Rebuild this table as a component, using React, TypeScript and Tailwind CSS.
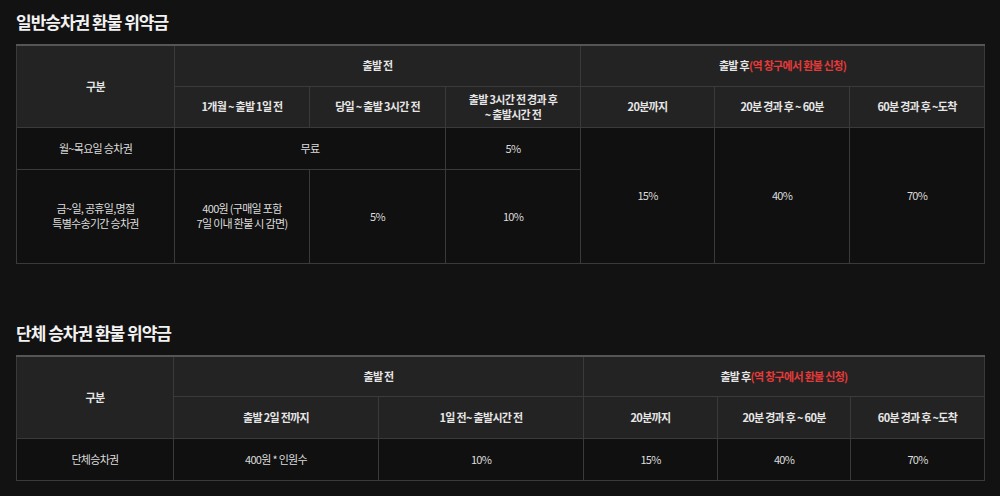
const font = {
  fontFamily: '"Noto Sans CJK KR", "Noto Sans", sans-serif',
};

const th =
  "border border-[#3a3a3a] bg-[#232323] text-center align-middle text-[11px] font-bold tracking-[-0.7px] text-[#e6e6e6] leading-[15px]";
const td =
  "border border-[#3a3a3a] bg-[#101010] text-center align-middle text-[11px] tracking-[-0.7px] text-[#dcdcdc] leading-[15px]";

function Title({ children }: { children: React.ReactNode }) {
  return (
    <h2 className="h-[24px] text-[17px] font-bold leading-[24px] tracking-[-1px] text-[#f2f2f2]">
      {children}
    </h2>
  );
}

function AfterHead() {
  return (
    <>
      출발 후<span className="text-[#e53a3a]">(역 창구에서 환불 신청)</span>
    </>
  );
}

function App() {
  return (
    <div className="min-h-[496px] bg-[#121212] px-4 pt-[10px]" style={font}>
      <Title>일반승차권 환불 위약금</Title>
      <table className="mt-[10px] w-[968px] table-fixed border-collapse border-t-2 border-t-[#555]">
        <colgroup>
          <col className="w-[158px]" />
          <col className="w-[135px]" />
          <col className="w-[136px]" />
          <col className="w-[135px]" />
          <col className="w-[134px]" />
          <col className="w-[135px]" />
          <col className="w-[135px]" />
        </colgroup>
        <thead>
          <tr className="h-[41px]">
            <th rowSpan={2} className={th + " border-t-2 border-t-[#555]"}>
              구분
            </th>
            <th colSpan={3} className={th + " border-t-2 border-t-[#555]"}>
              출발 전
            </th>
            <th colSpan={3} className={th + " border-t-2 border-t-[#555]"}>
              <AfterHead />
            </th>
          </tr>
          <tr className="h-[41px]">
            <th className={th}>1개월 ~ 출발 1일 전</th>
            <th className={th}>당일 ~ 출발 3시간 전</th>
            <th className={th}>
              출발 3시간 전 경과 후
              <br />~ 출발시간 전
            </th>
            <th className={th}>20분까지</th>
            <th className={th}>20분 경과 후 ~ 60분</th>
            <th className={th}>60분 경과 후 ~도착</th>
          </tr>
        </thead>
        <tbody>
          <tr className="h-[42px]">
            <td className={td}>월~목요일 승차권</td>
            <td colSpan={2} className={td}>
              무료
            </td>
            <td className={td}>5%</td>
            <td rowSpan={2} className={td}>
              15%
            </td>
            <td rowSpan={2} className={td}>
              40%
            </td>
            <td rowSpan={2} className={td}>
              70%
            </td>
          </tr>
          <tr className="h-[94px]">
            <td className={td}>
              금~일, 공휴일,명절
              <br />
              특별수송기간 승차권
            </td>
            <td className={td}>
              400원 (구매일 포함
              <br />
              7일 이내 환불 시 감면)
            </td>
            <td className={td}>5%</td>
            <td className={td}>10%</td>
          </tr>
        </tbody>
      </table>

      <div className="mt-[57px]">
        <Title>단체 승차권 환불 위약금</Title>
      </div>
      <table className="mt-[10px] w-[968px] table-fixed border-collapse">
        <colgroup>
          <col className="w-[157px]" />
          <col className="w-[205px]" />
          <col className="w-[205px]" />
          <col className="w-[134px]" />
          <col className="w-[133px]" />
          <col className="w-[134px]" />
        </colgroup>
        <thead>
          <tr className="h-[41px]">
            <th rowSpan={2} className={th + " border-t-2 border-t-[#555]"}>
              구분
            </th>
            <th colSpan={2} className={th + " border-t-2 border-t-[#555]"}>
              출발 전
            </th>
            <th colSpan={3} className={th + " border-t-2 border-t-[#555]"}>
              <AfterHead />
            </th>
          </tr>
          <tr className="h-[42px]">
            <th className={th}>출발 2일 전까지</th>
            <th className={th}>1일 전~ 출발시간 전</th>
            <th className={th}>20분까지</th>
            <th className={th}>20분 경과 후 ~ 60분</th>
            <th className={th}>60분 경과 후 ~도착</th>
          </tr>
        </thead>
        <tbody>
          <tr className="h-[42px]">
            <td className={td}>단체승차권</td>
            <td className={td}>400원 * 인원수</td>
            <td className={td}>10%</td>
            <td className={td}>15%</td>
            <td className={td}>40%</td>
            <td className={td}>70%</td>
          </tr>
        </tbody>
      </table>
    </div>
  );
}

export default App;
